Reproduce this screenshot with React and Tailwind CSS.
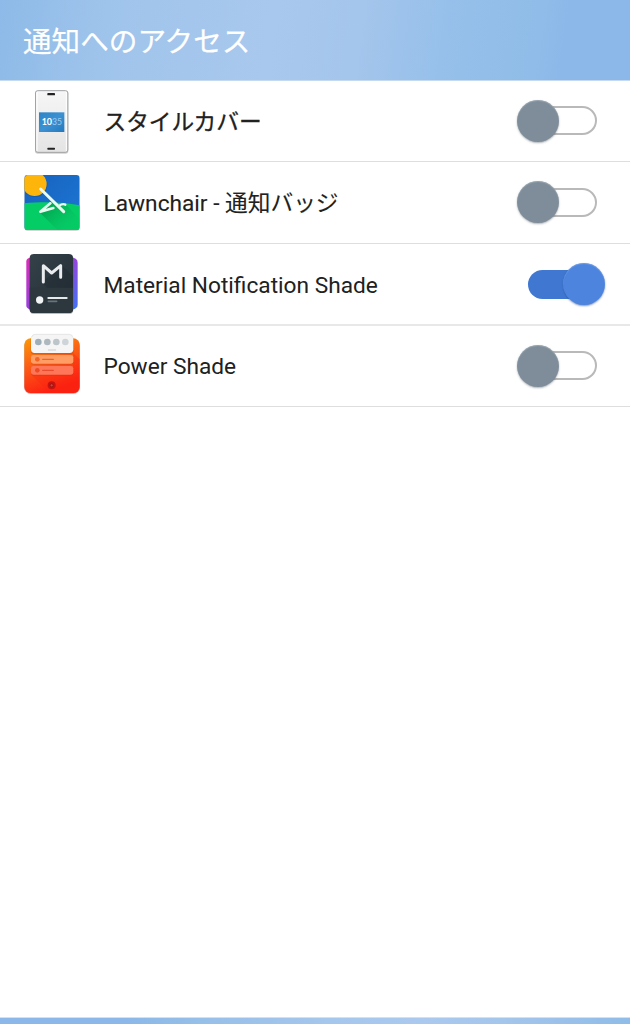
import React from 'react';

function CoverIcon() {
  return (
    <svg width="72" height="76" viewBox="0 0 216 228" className="block">
      <defs>
        <linearGradient id="cvBody" x1="0" y1="0" x2="0" y2="1">
          <stop offset="0" stopColor="#f6f6f6" />
          <stop offset="1" stopColor="#e4e4e5" />
        </linearGradient>
        <linearGradient id="cvScreen" x1="0" y1="0" x2="1" y2="1">
          <stop offset="0" stopColor="#2c84c6" />
          <stop offset="0.5" stopColor="#3b91d2" />
          <stop offset="1" stopColor="#2379be" />
        </linearGradient>
      </defs>
      <rect x="57" y="20" width="100" height="189" rx="8" fill="#a9aaac" opacity="0.55" />
      <rect x="58.500" y="20" width="97" height="185" rx="7" fill="url(#cvBody)" stroke="#a2a3a5" strokeWidth="3" />
      <path d="M63 24V201M151 24V201" stroke="#fff" strokeWidth="3" />
      <rect x="94" y="27" width="23" height="7" rx="2" fill="#222" />
      <rect x="94" y="191" width="23" height="6" rx="2" fill="#222" />
      <rect x="69" y="85" width="76" height="59" fill="url(#cvScreen)" />
      <text x="77" y="124" fontFamily="Lato, sans-serif" fontSize="29" fontWeight="700" fill="#fff" textLength="31" lengthAdjust="spacingAndGlyphs">10</text>
      <text x="108" y="124" fontFamily="Lato, sans-serif" fontSize="29" fontWeight="400" fill="#9dcbee" textLength="30" lengthAdjust="spacingAndGlyphs">35</text>
    </svg>
  );
}

function LawnchairIcon() {
  return (
    <svg width="72" height="76" viewBox="0 0 216 228" className="block">
      <defs>
        <clipPath id="lwClip"><rect x="25" y="27" width="166" height="165" rx="10" /></clipPath>
        <linearGradient id="lwSky" x1="0" y1="0" x2="1" y2="1">
          <stop offset="0" stopColor="#1761bd" />
          <stop offset="1" stopColor="#1d78d6" />
        </linearGradient>
        <linearGradient id="lwShade" gradientUnits="userSpaceOnUse" x1="100" y1="110" x2="160" y2="180">
          <stop offset="0" stopColor="#008e43" stopOpacity="0.65" />
          <stop offset="1" stopColor="#00b75a" stopOpacity="0.1" />
        </linearGradient>
      </defs>
      <rect x="25" y="30" width="166" height="165" rx="11" fill="#8a8a8a" opacity="0.35" />
      <g clipPath="url(#lwClip)">
        <rect x="25" y="27" width="166" height="165" fill="url(#lwSky)" />
        <path d="M25 112C75 107 140 107 191 118V192H25Z" fill="#05cd66" />
        <circle cx="58" cy="57" r="36" fill="#0d4f9f" opacity="0.45" />
        <circle cx="56" cy="54" r="36" fill="#fdb50c" />
        <path d="M72 140L124 192H191V160L148 113L130 120L146 138L110 110Z" fill="url(#lwShade)" />
      </g>
      <g fill="none" stroke="#e9fbf1" strokeWidth="9" strokeLinecap="round" strokeLinejoin="round">
        <path d="M74 69L143 137" />
        <path d="M103 112L73 137L112 126" strokeWidth="8" />
        <path d="M130 119Q140 112 148 116" strokeWidth="7" />
      </g>
    </svg>
  );
}

function MaterialIcon() {
  return (
    <svg width="72" height="76" viewBox="0 0 216 228" className="block">
      <defs>
        <linearGradient id="mtLeft" x1="0" y1="0" x2="0" y2="1">
          <stop offset="0" stopColor="#dc2bb8" />
          <stop offset="1" stopColor="#9640df" />
        </linearGradient>
        <linearGradient id="mtRight" x1="0" y1="0" x2="0" y2="1">
          <stop offset="0" stopColor="#9842da" />
          <stop offset="1" stopColor="#3f72f3" />
        </linearGradient>
        <linearGradient id="mtCard" x1="0" y1="0" x2="1" y2="1">
          <stop offset="0" stopColor="#354149" />
          <stop offset="1" stopColor="#222d34" />
        </linearGradient>
      </defs>
      <path d="M42 29Q31 31 31 40V174Q31 181 44 185Z" fill="url(#mtLeft)" />
      <path d="M169 28L179 32Q185 35 185 44V170Q185 178 179 181L169 186Z" fill="url(#mtRight)" />
      <rect x="41" y="20" width="131" height="178" rx="12" fill="#555" opacity="0.4" />
      <rect x="41" y="18" width="130" height="177" rx="12" fill="url(#mtCard)" />
      <path d="M78 103L138 53L171 85V119H94Z" fill="#202a31" opacity="0.5" />
      <path d="M41 119H171V183Q171 195 159 195H53Q41 195 41 183Z" fill="#2c373e" />
      <path d="M82 102V53L107 75L134 53V88" fill="none" stroke="#e9edef" strokeWidth="9" strokeLinecap="round" strokeLinejoin="round" />
      <circle cx="71" cy="156" r="11" fill="#f1f3f4" />
      <path d="M97 150H152" stroke="#e6e9ea" strokeWidth="6" strokeLinecap="round" />
      <path d="M97 160H122" stroke="#69737a" strokeWidth="5" strokeLinecap="round" />
    </svg>
  );
}

function PowerIcon() {
  return (
    <svg width="72" height="76" viewBox="0 0 216 228" className="block">
      <defs>
        <linearGradient id="pwBody" x1="0" y1="0" x2="0.35" y2="1">
          <stop offset="0" stopColor="#fd9906" />
          <stop offset="0.5" stopColor="#fb5b15" />
          <stop offset="1" stopColor="#fd2012" />
        </linearGradient>
      </defs>
      <rect x="24" y="28" width="168" height="164" rx="20" fill="#8d6a60" opacity="0.45" />
      <rect x="25" y="25" width="166" height="164" rx="19" fill="url(#pwBody)" />
      <path d="M46 134L101 189H172Q191 189 191 170V88L171 68V134Z" fill="#f92611" opacity="0.3" />
      <rect x="44" y="18" width="129" height="55" rx="11" fill="#a63b10" opacity="0.35" />
      <rect x="45" y="13" width="127" height="56" rx="11" fill="#f5f5f5" />
      <path d="M47 22Q49 13 57 13H160Q168 13 170 22" fill="none" stroke="#dcdcdc" strokeWidth="2" />
      <circle cx="67" cy="36" r="10" fill="#9eafb8" />
      <circle cx="94" cy="36" r="10" fill="#adb9bf" />
      <circle cx="121" cy="36" r="10" fill="#bcc5ca" />
      <circle cx="148" cy="36" r="10" fill="#ced5d8" />
      <path d="M97 60H119" stroke="#c9cccd" strokeWidth="3" strokeLinecap="round" />
      <rect x="45" y="78" width="127" height="26" rx="7" fill="#c74819" opacity="0.4" />
      <rect x="45" y="75" width="127" height="26" rx="7" fill="#ff9d64" />
      <circle cx="64" cy="88" r="7" fill="#f26427" />
      <path d="M80 88H112" stroke="#e96431" strokeWidth="4" strokeLinecap="round" />
      <rect x="45" y="111" width="127" height="26" rx="7" fill="#c92f19" opacity="0.4" />
      <rect x="45" y="108" width="127" height="26" rx="7" fill="#ff7759" />
      <circle cx="64" cy="121" r="7" fill="#ee4b25" />
      <path d="M80 121H112" stroke="#e84e2f" strokeWidth="4" strokeLinecap="round" />
      <circle cx="107" cy="166" r="12" fill="#c91310" />
      <circle cx="107" cy="166" r="5" fill="#e8392a" stroke="#961512" strokeWidth="3" />
    </svg>
  );
}

function Toggle({ on }) {
  if (on) {
    return (
      <div role="switch" aria-checked="true" className="relative mr-[25px] flex h-[43px] w-[77px] items-center">
        <div className="h-[29px] w-[60px] rounded-full bg-[#4078d1]" />
        <div className="absolute top-0 right-0 size-[42px] rounded-full bg-[#4c84de] shadow-[0_1px_2px_rgba(40,80,150,0.6),inset_0_1px_1px_rgba(130,170,235,0.6)]" />
      </div>
    );
  }
  return (
    <div role="switch" aria-checked="false" className="relative mr-[33px] mb-px flex h-[42px] w-[80px] items-center justify-end">
      <div className="h-[29px] w-[68px] rounded-full border-2 border-[#b9b9b9] bg-white" />
      <div className="absolute top-0 left-0 size-[42px] rounded-full bg-[#7f8d9a] shadow-[0_1px_2px_rgba(90,100,110,0.5),inset_0_1px_1px_rgba(170,182,192,0.6)]" />
    </div>
  );
}

const apps = [
  { name: 'スタイルカバー', Icon: CoverIcon, on: false, row: 'h-[81px] border-b border-[#dedede]', pad: 'pt-[3px]', label: 'pt-[3px] text-[22.7px] [-webkit-text-stroke:0.3px_#212121]' },
  { name: 'Lawnchair - 通知バッジ', Icon: LawnchairIcon, on: false, row: 'h-[82px] border-b border-[#dedede]', pad: 'pt-[4px]', label: 'pt-[2px] text-[22.7px] [-webkit-text-stroke:0.1px_#212121]' },
  { name: 'Material Notification Shade', Icon: MaterialIcon, on: true, row: 'h-[82px] border-b-2 border-[#e8e8e8]', pad: 'pt-[4px]', label: 'pt-[3px] text-[22.7px]' },
  { name: 'Power Shade', Icon: PowerIcon, on: false, row: 'h-[81px] border-b border-[#dedede]', pad: 'pt-[4px]', label: 'pt-[2px] text-[22.7px]' },
];

export default function App() {
  return (
    <div className="flex h-[1024px] w-[630px] flex-col overflow-hidden bg-white font-[Roboto,'Noto_Sans_CJK_JP',sans-serif] text-[#212121]">
      <header className="flex h-[81px] shrink-0 items-center border-b border-[#c5daee] bg-[linear-gradient(98deg,#8dbae8_0%,#9fc4eb_17%,#a9c8ed_43%,#a4c5ec_57%,#96c0ea_70%,#8fbce8_85%,#8bb8e9_89%,#8bb8e9_100%)] pl-[23px]">
        <h1 className="pt-[5px] text-[28.6px] leading-none font-normal whitespace-nowrap text-white [-webkit-text-stroke:0.2px_white]">通知へのアクセス</h1>
      </header>
      <main className="flex-1">
        {apps.map(({ name, Icon, on, row, pad, label }) => (
          <div key={name} className={`flex items-center ${row}`}>
            <div className={`ml-4 h-full w-[72px] shrink-0 ${pad}`}><Icon /></div>
            <span className={`ml-[15.5px] flex-1 leading-[32px] whitespace-nowrap ${label}`}>{name}</span>
            <Toggle on={on} />
          </div>
        ))}
      </main>
      <footer className="h-[7px] shrink-0 border-t border-[#cfe2f1] bg-[linear-gradient(90deg,#8bb8e8_0%,#8bb8e8_20%,#98c0e9_34%,#a5c6ed_52%,#abc9ef_67%,#a4c5ec_80%,#8fbce8_100%)]" />
    </div>
  );
}
